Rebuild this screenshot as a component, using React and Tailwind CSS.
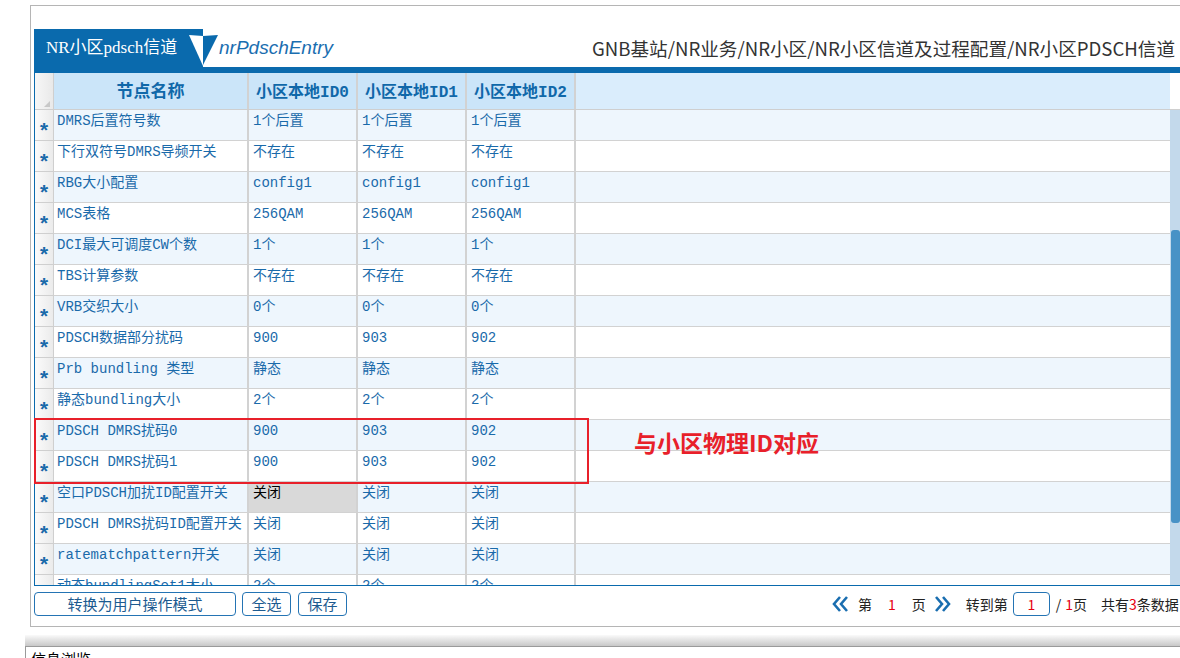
import React from 'react';

const mono = "font-['Liberation_Mono','Noto_Sans_CJK_SC',monospace]";
const sans = "font-['Noto_Sans_CJK_SC','Liberation_Sans',sans-serif]";

const rows = [
  ['DMRS后置符号数', '1个后置', '1个后置', '1个后置'],
  ['下行双符号DMRS导频开关', '不存在', '不存在', '不存在'],
  ['RBG大小配置', 'config1', 'config1', 'config1'],
  ['MCS表格', '256QAM', '256QAM', '256QAM'],
  ['DCI最大可调度CW个数', '1个', '1个', '1个'],
  ['TBS计算参数', '不存在', '不存在', '不存在'],
  ['VRB交织大小', '0个', '0个', '0个'],
  ['PDSCH数据部分扰码', '900', '903', '902'],
  ['Prb bundling 类型', '静态', '静态', '静态'],
  ['静态bundling大小', '2个', '2个', '2个'],
  ['PDSCH DMRS扰码0', '900', '903', '902'],
  ['PDSCH DMRS扰码1', '900', '903', '902'],
  ['空口PDSCH加扰ID配置开关', '关闭', '关闭', '关闭'],
  ['PDSCH DMRS扰码ID配置开关', '关闭', '关闭', '关闭'],
  ['ratematchpattern开关', '关闭', '关闭', '关闭'],
  ['动态bundlingSet1大小', '2个', '2个', '2个'],
];

const Chevrons = ({ flip }) => (
  <svg width="16" height="16" viewBox="0 0 16 16" className={flip ? 'rotate-180' : ''}>
    <polyline points="8,1 2,8 8,15" fill="none" stroke="#1a6eb0" strokeWidth="2.6" />
    <polyline points="15,1 9,8 15,15" fill="none" stroke="#1a6eb0" strokeWidth="2.6" />
  </svg>
);

const TabBar = () => (
  <div className="flex h-[38px] items-stretch">
    <div className="w-[155px] bg-[#0a6aad] text-white text-[17px] leading-[38px] pl-[12px] font-['Liberation_Serif','Noto_Sans_CJK_SC',serif]">
      NR小区pdsch信道
    </div>
    <svg width="29" height="38" viewBox="0 0 29 38">
      <rect x="0" y="0" width="14" height="38" fill="#0a6aad" />
      <polygon points="0,6 14,7 14,37" fill="#ffffff" />
      <polygon points="14,7 29,6 14,36" fill="#0a6aad" />
    </svg>
    <div className="text-[19px] italic text-[#1a6eb0] leading-[38px] pl-[1px] font-['Liberation_Sans',sans-serif]">
      nrPdschEntry
    </div>
    <div className={`ml-auto mr-[24px] text-[18.6px] text-[#333] leading-[38px] ${sans}`}>
      GNB基站/NR业务/NR小区/NR小区信道及过程配置/NR小区PDSCH信道
    </div>
  </div>
);

const HeaderRow = () => (
  <div className="flex h-[37px] border-b border-[#cfcfcf]">
    <div className="relative w-[19px] border-r border-[#cfcfcf] bg-linear-to-r from-[#f7f7f7] to-[#e9e9e9]">
      <svg className="absolute right-[3px] bottom-[2px]" width="6" height="6" viewBox="0 0 6 6">
        <polygon points="6,0 6,6 0,6" fill="#c8c8c8" />
      </svg>
    </div>
    <div className={`w-[195px] border-r-2 border-[#d2d2d2] bg-[#cbe5f9] text-[#1068a9] text-[17px] font-bold leading-[36px] pt-[2px] text-center ${mono}`}>
      节点名称
    </div>
    {['小区本地ID0', '小区本地ID1', '小区本地ID2'].map(h => (
      <div key={h} className={`w-[109px] border-r-2 border-[#d2d2d2] bg-[#cbe5f9] text-[#1068a9] text-[16px] font-bold leading-[36px] pt-[2px] text-center ${mono}`}>
        {h}
      </div>
    ))}
    <div className="flex-1 bg-[#daedfc]" />
    <div className="w-[10px] bg-white" />
  </div>
);

const BodyRow = ({ row, index }) => {
  const light = index % 2 === 0;
  return (
    <div className={`flex h-[31px] shrink-0 ${light ? 'bg-[#eef6fd]' : 'bg-white'}`}>
      <div className="w-[19px] border-r border-b border-[#cfcfcf] bg-linear-to-r from-[#fbfbfb] to-[#ebebeb] flex justify-center pt-[12px]">
        <span className="text-[#1a6aaa] text-[21px] font-bold leading-[21px] font-['Liberation_Mono',monospace]">*</span>
      </div>
      <div className={`w-[195px] border-r-2 border-b border-[#d2d2d2] pl-[3px] pt-[1px] text-[14px] leading-[20px] text-[#1a6aaa] whitespace-nowrap overflow-hidden ${mono}`}>
        {row[0]}
      </div>
      {row.slice(1).map((v, i) => {
        const selected = index === 12 && i === 0;
        return (
          <div
            key={i}
            className={`w-[109px] border-r-2 border-b border-[#d2d2d2] pl-[4px] pt-[1px] text-[14px] leading-[20px] whitespace-nowrap ${mono} ${selected ? 'bg-[#d9d9d9] text-black' : 'text-[#1a6aaa]'}`}
          >
            {v}
          </div>
        );
      })}
      <div className="flex-1 border-b border-[#d2d2d2]" />
    </div>
  );
};

const Table = () => (
  <div className="w-[1146px] h-[513px] border-l border-b border-[#0a6aad] flex flex-col">
    <HeaderRow />
    <div className="flex flex-1 overflow-hidden">
      <div className="flex-1 flex flex-col overflow-hidden">
        {rows.map((r, i) => (
          <BodyRow key={i} row={r} index={i} />
        ))}
      </div>
      <div className="w-[10px] bg-[#c3d9eb] pt-[120px] pl-[1px]">
        <div className="h-[293px] rounded-[3px] bg-[#4892c6]" />
      </div>
    </div>
  </div>
);

const Btn = ({ w, children }) => (
  <button className={`${w} h-[24px] rounded-[4px] border-[1.5px] border-[#2474b4] bg-white text-[15px] leading-[20px] text-[#1d5b90] ${sans}`}>
    {children}
  </button>
);

const Toolbar = () => (
  <div className={`flex items-center h-[24px] mt-[6px] text-[14px] text-[#222] ${sans}`}>
    <Btn w="w-[202px]">转换为用户操作模式</Btn>
    <div className="ml-[6px]"><Btn w="w-[49px]">全选</Btn></div>
    <div className="ml-[7px]"><Btn w="w-[49px]">保存</Btn></div>
    <div className="ml-[485px] flex items-center"><Chevrons /></div>
    <span className="ml-[10px]">第</span>
    <span className="ml-[16px] text-[#e60012]">1</span>
    <span className="ml-[16px]">页</span>
    <div className="ml-[9px] flex items-center"><Chevrons flip /></div>
    <span className="ml-[15px]">转到第</span>
    <div className="ml-[5px] w-[37px] h-[24px] rounded-[4px] border border-[#2474b4] text-center leading-[22px] text-[#e60012]">1</div>
    <span className="ml-[6px]">/</span>
    <span className="ml-[4px] text-[#e60012]">1</span>
    <span>页</span>
    <span className="ml-[14px] whitespace-nowrap">共有<span className="text-[#e60012]">3</span>条数据</span>
  </div>
);

export default function App() {
  return (
    <div className="relative w-[1180px] h-[658px] overflow-hidden bg-white">
      <div className="ml-[30px] mt-[5px] w-[1170px] h-[622px] border border-[#b5b5b5] pl-[3px] pt-[23px] flex flex-col">
        <TabBar />
        <div className="h-[6px] bg-[#0a6aad]" />
        <Table />
        <Toolbar />
      </div>
      <div className="mt-[8px] ml-[25px] h-[11px] bg-linear-to-b from-[#fafafa] to-[#c8c8c8]" />
      <div className={`ml-[25px] border-l border-t border-[#9a9a9a] pl-[5px] pt-[1px] text-[15px] text-black ${sans}`}>
        信息浏览
      </div>

      <div className="absolute left-[34px] top-[418px] w-[555px] h-[66px] border-2 border-[#e8202a]" />
      <div className={`absolute left-[634px] top-[428px] text-[23px] font-bold leading-[28px] text-[#e8202a] ${sans}`}>
        与小区物理ID对应
      </div>
    </div>
  );
}
